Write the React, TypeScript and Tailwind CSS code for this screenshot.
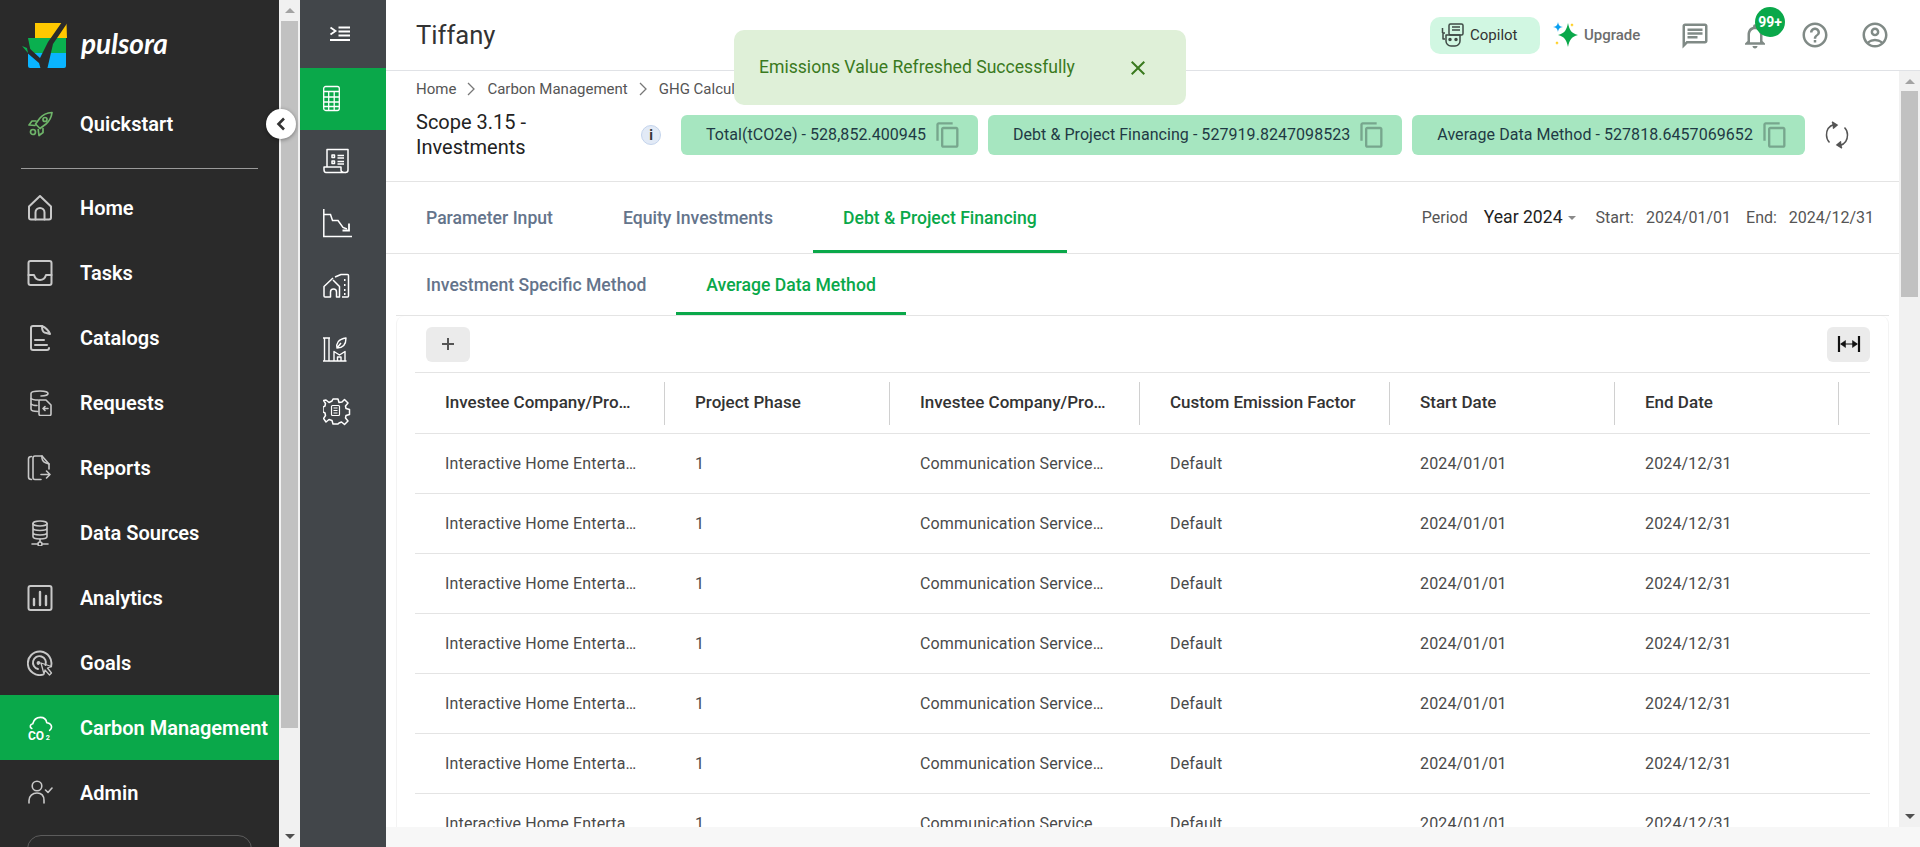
import React from "react";
import { MdOutlineChat, MdNotificationsNone, MdHelpOutline, MdOutlineAccountCircle, MdOutlineContentCopy, MdClose } from "react-icons/md";

const s = { fill: "none", stroke: "currentColor", strokeWidth: 2, strokeLinecap: "round" as const, strokeLinejoin: "round" as const };

const SideIcons: Record<string, React.ReactNode> = {
  rocket: (
    <svg width="26" height="26" viewBox="0 0 26 26" {...s} strokeWidth={1.7} className="text-[#6fb56a]">
      <path d="M25 1.500c-5 .4-9 2-12 5.500l-4.500 6 4.500 4.500 6-4.500c3.500-3 5.500-7 6-11.500Z" />
      <path d="M9 10H5l-3 4 6 .5M16 17.500V21.500l-4 3-.8-6" />
      <circle cx="18" cy="8.500" r="2" />
      <circle cx="6" cy="21" r="2.500" />
    </svg>
  ),
  home: (
    <svg width="26" height="26" viewBox="0 0 26 26" {...s}>
      <path d="M2 11.500 13 1l11 10.500V22.500a2 2 0 0 1-2 2H4a2 2 0 0 1-2-2Z" />
      <path d="M8.500 24.500V17.500a4.500 4.500 0 0 1 9 0v7" />
    </svg>
  ),
  tasks: (
    <svg width="26" height="26" viewBox="0 0 26 26" {...s}>
      <rect x="1.500" y="1" width="23" height="24" rx="2" />
      <path d="M1.500 15H7c1 3.500 3 5 6 5s5-1.500 6-5h5.500" />
    </svg>
  ),
  catalogs: (
    <svg width="26" height="26" viewBox="0 0 26 26" {...s}>
      <path d="M15 1H6a2 2 0 0 0-2 2v20a2 2 0 0 0 2 2h14a2 2 0 0 0 2-2" />
      <path d="M15 1c0 3.500 1 6 2.500 6.500L23 9c-1.500-3.500-4.500-6.500-8-8Z" />
      <path d="M8 15h9M8 20h12" />
    </svg>
  ),
  requests: (
    <svg width="26" height="26" viewBox="0 0 26 26" {...s} strokeWidth={1.6}>
      <path d="M14 6c4 0 7-1.200 7-2.500S18 1 13 1 4 2 4 3.500V19c0 1.500 3 2.500 7 2.500" />
      <path d="M4 8.500c1 1 4 1.500 7 1.500M4 14c1 1 4 1.500 6 1.500" />
      <path d="M12 10h7l5 5v9a1.500 1.500 0 0 1-1.500 1.500h-9A1.500 1.500 0 0 1 12 24Z" />
      <path d="M21 18.500h-5m2-2-2 2 2 2" />
    </svg>
  ),
  reports: (
    <svg width="26" height="26" viewBox="0 0 26 26" {...s} strokeWidth={1.6}>
      <path d="M4.500 1.500c-2 0-3 1-3 2.500v18c0 1.500 1 2.500 3 2.500" />
      <path d="M22 14V9l-7-8H8a2 2 0 0 0-2 2v19.500A2 2 0 0 0 8 24.500h6" />
      <path d="M15 1c-.5 3 1 6 3 6.500L22 9" />
      <path d="M14 19.500h9m-3.500-3.500 3.500 3.500-3.500 3.500" />
    </svg>
  ),
  data: (
    <svg width="26" height="26" viewBox="0 0 26 26" {...s} strokeWidth={1.6}>
      <ellipse cx="13" cy="3.500" rx="7" ry="2.500" />
      <path d="M6 3.500v13c0 1.400 3 2.500 7 2.500s7-1.100 7-2.500v-13M6 8c0 1.400 3 2.500 7 2.500s7-1.100 7-2.500M6 12.500c0 1.400 3 2.500 7 2.500s7-1.100 7-2.500" />
      <path d="M13 19v2.500M5 24h5.500M15.500 24H21" />
      <circle cx="13" cy="24" r="2" />
    </svg>
  ),
  analytics: (
    <svg width="26" height="26" viewBox="0 0 26 26" {...s}>
      <rect x="1.500" y="1" width="23" height="24" rx="2" />
      <path d="M7 14v6M13 7v13M19 11v9" strokeWidth={2.400} />
    </svg>
  ),
  goals: (
    <svg width="26" height="26" viewBox="0 0 26 26" {...s} strokeWidth={1.9}>
      <path d="M24 16.500A11.800 11.800 0 1 0 16 24.600" />
      <path d="M18.500 15A6.500 6.500 0 1 0 11 19" />
      <path d="M12.500 13a1 1 0 1 0-1 1" />
      <path d="M14 13l10.500 3.500-4 1.500 4 5-2 2-4.500-5-1 4Z" strokeWidth={1.300} />
    </svg>
  ),
  co2: (
    <svg width="27" height="27" viewBox="0 0 27 27" className="text-white">
      <path d="M5 13.500c-2.500-1-2-4.500 1-5 1-4 3.500-6.500 8-6.500 4 0 6 2.500 6.500 5.500 3.500.5 5 2.500 5 4.500 0 1.500-.6 2.600-2 3.500" {...s} strokeWidth={1.700} />
      <text x="1" y="25" fontFamily="Roboto" fontWeight="700" fontSize="12.500" fill="currentColor">CO</text>
      <text x="19.500" y="25" fontFamily="Roboto" fontWeight="700" fontSize="7.500" fill="currentColor">2</text>
    </svg>
  ),
  admin: (
    <svg width="26" height="26" viewBox="0 0 26 26" {...s} strokeWidth={1.600}>
      <circle cx="10" cy="6" r="4.800" />
      <path d="M2 23v-2.500C2 16 5.500 13 10 13s7 3 7 7.500V23" />
      <path d="m18.500 10 2.500 2.500 4-4.500" />
    </svg>
  ),
};

const RailIcons: Record<string, React.ReactNode> = {
  menu: (
    <svg width="30" height="30" viewBox="0 0 30 30" fill="none" stroke="white" strokeWidth="1.800">
      <path d="m7.500 8.500 5 3.500-5 3.500" />
      <path d="M15.500 8.500H27M15.500 12.500H27M15.500 16.500H27M7 21H27" />
    </svg>
  ),
  calc: (
    <svg width="30" height="30" viewBox="0 0 30 30" fill="none" stroke="white" strokeWidth="1.300">
      <rect x="0.700" y="2.500" width="15.600" height="24" rx="2" />
      <path d="M0.700 7.500h15.600M0.700 13h15.600M0.700 18h15.600M0.700 22.500h15.600M5.700 7.500v19M11.200 7.500v19" />
    </svg>
  ),
  doc: (
    <svg width="30" height="30" viewBox="0 0 30 30" fill="none" stroke="white" strokeWidth="1.500" strokeLinejoin="round">
      <path d="M4 21V3.500h21V24c0 1.500-1 2.500-2.500 2.500" />
      <path d="M1 23.500V21h17v3c0 1.500 1.800 2.500 4.500 2.500H3c-1.300 0-2-1.500-2-3Z" />
      <path d="M9 9h2.500v2.500H9zM9 15h2.500v2.500H9zM14.500 9.500H21M14.500 12H21M14.500 15.500H21M14.500 18H21" />
    </svg>
  ),
  chart: (
    <svg width="30" height="30" viewBox="0 0 30 30" fill="none" stroke="white" strokeWidth="1.500">
      <path d="M0.800 1V28.500H29" />
      <path d="M1 6.500h6.500l2 6h5.500l5 7 4 1.500" />
      <path d="M26 15.500v7h-6.500" strokeWidth="1.800" />
    </svg>
  ),
  building: (
    <svg width="30" height="30" viewBox="0 0 30 30" fill="none" stroke="white" strokeWidth="1.500" strokeLinejoin="round">
      <path d="M10 7 1 15.500V25a1 1 0 0 0 1 1h5.500v-5a3 3 0 0 1 6 0v5h3V15.500L10 9" />
      <path d="M12 6 18 3.500h6.500a1 1 0 0 1 1 1V25a1 1 0 0 1-1 1H19" />
      <path d="M21 9h1.500M21 14h1.500M21 19h1.500M21 23h1.500" strokeWidth="2" />
    </svg>
  ),
  factory: (
    <svg width="30" height="30" viewBox="0 0 30 30" fill="none" stroke="white" strokeWidth="1.400" strokeLinejoin="round">
      <path d="M0 4h7M0 27h23.500M1.500 4v23M6 4v23M11 27V17.500l5.500 3.500 5.500-3.500V27" />
      <path d="M14.500 27v-4h3.500v4" />
      <path d="M14 14c-1-4 1-9 9-10 0 6-3 10-9 10Zm0 0 4-5" />
    </svg>
  ),
  gear: (
    <svg width="30" height="30" viewBox="0 0 30 30" fill="none" stroke="white" strokeWidth="1.500" strokeLinejoin="round">
      <path d="M10 2h5l1 3.500 3-.5 2.500-2.500 3.500 3.500-2.500 3 .5 2.500 3.500 1v5l-3.500 1-.5 2.500 2.500 3-3.500 3.500-3-2.500-2.500 1L15 27h-5l-1-3.500-3-1-3 2.500L.5 21.500l2-3-.5-2.500-2-1v-5l2-1 .5-2.500-2-3L3 3l3 2.500 3-1.500Z" />
      <rect x="8.500" y="8.500" width="8" height="10" rx="1" strokeWidth="1.200" />
      <path d="M10.500 11h4M10.500 13.500h4M10.500 16h4" strokeWidth="1.200" />
    </svg>
  ),
};

const navItems: [string, string][] = [
  ["home", "Home"],
  ["tasks", "Tasks"],
  ["catalogs", "Catalogs"],
  ["requests", "Requests"],
  ["reports", "Reports"],
  ["data", "Data Sources"],
  ["analytics", "Analytics"],
  ["goals", "Goals"],
  ["co2", "Carbon Management"],
  ["admin", "Admin"],
];

function NavRow({ icon, label, active }: { icon: string; label: string; active?: boolean }) {
  return (
    <div className={`flex h-[65px] shrink-0 items-center pl-[27px] ${active ? "bg-[#0aa84a] text-white" : "text-[#c8c8c8]"}`}>
      <span className="flex h-[26px] w-[26px] shrink-0">{SideIcons[icon]}</span>
      <span className="ml-[27px] whitespace-nowrap text-[20px] font-semibold leading-none text-white">{label}</span>
    </div>
  );
}

function Logo() {
  return (
    <svg width="48" height="48" viewBox="0 0 48 48" className="shrink-0">
      <path d="M14 1h31.500L46 16H14Z" fill="#ffc800" />
      <path d="M7 16h38v15H10Z" fill="#0ab04f" />
      <path d="M7 31h38v13a2 2 0 0 1-2 2H9a2 2 0 0 1-2-2Z" fill="#0ab4ff" />
      <path d="M0 22l7 3 12 11 8-16L41 0h6L32 22l-6 26H20l-2-7L4 29Z" fill="#2a2a2a" />
      <path d="M1 24l5 2 1 5Z" fill="#0ab04f" />
    </svg>
  );
}

function Scrollbar({ thumbTop, thumbHeight }: { thumbTop: string; thumbHeight: string }) {
  return (
    <div className="relative flex w-[21px] shrink-0 flex-col items-center justify-between bg-[#f1f1f1] py-[8px]">
      <span className="h-0 w-0 border-x-[5px] border-b-[5px] border-x-transparent border-b-[#a3a3a3]" />
      <span className={`absolute left-[2px] w-[17px] bg-[#c1c1c1] ${thumbTop} ${thumbHeight}`} />
      <span className="h-0 w-0 border-x-[5px] border-t-[5px] border-x-transparent border-t-[#505050]" />
    </div>
  );
}

function Pill({ text }: { text: string }) {
  return (
    <div className="flex h-[40px] items-center gap-[8px] rounded-[6px] bg-[#a6e6c0] pl-[25px] pr-[16px] text-[16px] tracking-[0.05px] text-[#1f3a44]">
      <span className="whitespace-nowrap">{text}</span>
      <MdOutlineContentCopy className="text-[#77a68d]" size={28} />
    </div>
  );
}

const cols = ["w-[250px]", "w-[225px]", "w-[250px]", "w-[250px]", "w-[225px]", "w-[224px]"];
const headPad = ["pr-[33px]", "pr-[10px]", "pr-[33px]", "pr-[10px]", "pr-[10px]", "pr-[10px]"];
const cellPad = ["pr-[26px]", "pr-[10px]", "pr-[36px]", "pr-[10px]", "pr-[10px]", "pr-[10px]"];
const heads = ["Investee Company/Project Name", "Project Phase", "Investee Company/Project Sector", "Custom Emission Factor", "Start Date", "End Date"];
const cells = ["Interactive Home Entertainment", "1", "Communication Services Sector", "Default", "2024/01/01", "2024/12/31"];

function Table() {
  return (
    <div className="border-t border-[#e4e4e4]">
      <div className="flex h-[61px] items-center border-b border-[#e4e4e4]">
        {heads.map((h, i) => (
          <div key={h} className={`${cols[i]} ${headPad[i]} flex h-[43px] shrink-0 items-center border-r border-[#d0d0d0] pl-[30px] text-[17px] font-medium text-[#333333]`}>
            <span className="truncate">{h}</span>
          </div>
        ))}
      </div>
      {Array.from({ length: 7 }).map((_, r) => (
        <div key={r} className="flex h-[60px] shrink-0 items-center border-b border-[#e4e4e4]">
          {cells.map((c, i) => (
            <div key={i} className={`${cols[i]} ${cellPad[i]} shrink-0 pl-[30px] text-[16px] tracking-[0.16px] text-[#4a4a4a]`}>
              <div className="truncate">{c}</div>
            </div>
          ))}
        </div>
      ))}
    </div>
  );
}

export default function App() {
  return (
    <div className="flex h-[847px] w-[1920px] overflow-hidden bg-white font-['Roboto',sans-serif]">
      <aside className="flex h-full w-[279px] shrink-0 flex-col overflow-hidden bg-[#2a2a2a]">
        <div className="flex h-[91px] shrink-0 items-center pl-[21px]">
          <Logo />
          <span className="mb-[6px] ml-[12px] font-['Lato',sans-serif] text-[28px] font-bold italic leading-none text-white">pulsora</span>
        </div>
        <NavRow icon="rocket" label="Quickstart" />
        <div className="mx-[21px] mb-[6px] mt-[12px] h-px shrink-0 bg-[#9a9a9a]" />
        {navItems.map(([i, l]) => (
          <NavRow key={l} icon={i} label={l} active={l === "Carbon Management"} />
        ))}
        <div className="mx-[27px] mt-[10px] h-[40px] shrink-0 rounded-[14px] border border-[#5c5c5c]" />
      </aside>

      <Scrollbar thumbTop="top-[21px]" thumbHeight="h-[707px]" />

      <nav className="flex h-full w-[86px] shrink-0 flex-col bg-[#42464a]">
        {["menu", "calc", "doc", "chart", "building", "factory", "gear"].map((k, i) => (
          <div key={k} className={`flex shrink-0 items-center pl-[23px] ${i === 0 ? "h-[68px]" : i < 4 ? "h-[62px]" : "h-[63px]"} ${k === "calc" ? "bg-[#0aa84a]" : ""}`}>
            {RailIcons[k]}
          </div>
        ))}
      </nav>

      <main className="relative flex h-full min-w-0 flex-1 flex-col">
        <header className="flex h-[71px] shrink-0 items-center border-b border-[#e0e2e6] pl-[30px]">
          <span className="text-[25.6px] text-[#333333]">Tiffany</span>
          <div className="ml-auto flex items-center">
            <div className="flex h-[37px] w-[110px] items-center rounded-[10px] bg-[#d1f7e2] pl-[10px]">
              <svg width="24" height="24" viewBox="0 0 24 24" fill="none" stroke="#3f4a45" strokeWidth="1.500" strokeLinejoin="round">
                <rect x="9" y="1" width="14" height="11" rx="1.500" />
                <path d="M12 4h8M12 7h8" />
                <path d="M5 10H3v6h2M2.500 10V5" />
                <path d="M6 12h14v6a5 5 0 0 1-5 5h-4a5 5 0 0 1-5-5Z" />
                <circle cx="10" cy="16.500" r="1" fill="#3f4a45" />
                <circle cx="16" cy="16.500" r="1" fill="#3f4a45" />
              </svg>
              <span className="ml-[6px] text-[15px] text-[#333333]">Copilot</span>
            </div>
            <div className="ml-[13px] flex w-[90px] items-center">
              <svg width="26" height="34" viewBox="0 0 26 34">
                <path d="M15 5c1.500 7 3 10 10 12-7 2-8.500 5-10 12-1.500-7-3-10-10-12 7-2 8.500-5 10-12Z" fill="#0aa84a" />
                <path d="M5 4c.5 3 1.500 4.500 5 5-3.500.5-4.500 2-5 5-.5-3-1.500-4.500-5-5 3.500-.5 4.500-2 5-5Z" fill="#0aa0f0" />
                <path d="M19 5c.3 1.300.7 1.700 2 2-1.300.3-1.700.7-2 2-.3-1.300-.7-1.700-2-2 1.300-.3 1.700-.7 2-2Z" fill="#ffc800" />
                <path d="M4 23c.3 1.300.7 1.700 2 2-1.300.3-1.700.7-2 2-.3-1.300-.7-1.700-2-2 1.300-.3 1.700-.7 2-2Z" fill="#ffc800" />
              </svg>
              <span className="ml-[5px] text-[15px] font-medium text-[#6d6d6d]">Upgrade</span>
            </div>
            <div className="ml-[37px] flex items-center gap-[30px] pr-[30px] text-[#808a86]">
              <MdOutlineChat size={30} className="mt-[2px]" />
              <div className="relative">
                <MdNotificationsNone size={30} className="mt-[2px]" />
                <span className="absolute left-[15px] top-[-12px] flex h-[30px] w-[30px] items-center justify-center rounded-full bg-[#0aa84a] text-[14px] font-bold text-white">99+</span>
              </div>
              <MdHelpOutline size={30} />
              <MdOutlineAccountCircle size={30} />
            </div>
          </div>
        </header>

        <div className="flex min-h-0 flex-1">
          <div className="min-w-0 flex-1 overflow-hidden">
            <div className="flex h-[36px] items-center pl-[30px] text-[15px] text-[#555555]">
              <span>Home</span>
              <svg width="31" height="16" viewBox="0 0 31 16" fill="none" stroke="#777777" strokeWidth="1.300"><path d="m12 2 6 6-6 6" /></svg>
              <span>Carbon Management</span>
              <svg width="31" height="16" viewBox="0 0 31 16" fill="none" stroke="#777777" strokeWidth="1.300"><path d="m12 2 6 6-6 6" /></svg>
              <span>GHG Calculator</span>
            </div>
            <div className="flex h-[75px] items-start border-b border-[#e4e4e4] pl-[30px]">
              <div className="w-[225px] pt-[3px] text-[20px] leading-[25px] text-[#222222]">Scope 3.15 -<br />Investments</div>
              <span className="mt-[18px] flex h-[20px] w-[20px] items-center justify-center rounded-full border border-[#c4d4ec] bg-[#e2eaf6] text-[14px] font-bold text-[#333333]">i</span>
              <div className="ml-[20px] mt-[8px] flex gap-[10px]">
                <Pill text="Total(tCO2e) - 528,852.400945" />
                <Pill text="Debt & Project Financing - 527919.8247098523" />
                <Pill text="Average Data Method - 527818.6457069652" />
              </div>
              <svg className="ml-[18px] mt-[14px]" width="28" height="28" viewBox="0 0 28 28" fill="none" stroke="#555555" strokeWidth="1.500">
                <path d="M11 3.500C6 5 3.500 9 3.500 14c0 3 1 5.500 3 7.500" />
                <path d="M17 24.500c5-1.500 7.500-5.500 7.500-10.500 0-3-1-5.500-3-7.500" />
                <path d="m9 1 5 3-4 3.500" fill="#555555" />
                <path d="m19 27-5-3 4-3.500" fill="#555555" />
              </svg>
            </div>
            <div className="flex h-[72px] items-stretch border-b border-[#e4e4e4] pl-[10px]">
              <div className="mr-[10px] flex items-center px-[30px] pt-[1px] text-[17.6px] font-medium text-[#64748b]">Parameter Input</div>
              <div className="mr-[10px] flex items-center px-[30px] pt-[1px] text-[17.6px] font-medium text-[#64748b]">Equity Investments</div>
              <div className="flex items-center border-b-[3px] border-[#0aa84a] px-[30px] pt-[4px] text-[17.6px] font-medium text-[#0aa84a]">Debt &amp; Project Financing</div>
              <div className="ml-auto flex items-center pr-[25px] text-[16px] text-[#555555]">
                <span>Period</span>
                <span className="ml-[16px] text-[17.6px] text-[#222222]">Year 2024</span>
                <span className="ml-[5px] h-0 w-0 border-x-[4px] border-t-[4px] border-x-transparent border-t-[#8a8a8a]" />
                <span className="ml-[20px]">Start:</span>
                <span className="ml-[12px]">2024/01/01</span>
                <span className="ml-[15px]">End:</span>
                <span className="ml-[12px]">2024/12/31</span>
              </div>
            </div>
            <div className="mx-[10px] flex h-[62px] items-stretch border-b border-[#e4e4e4]">
              <div className="flex items-center px-[30px] pt-[2px] text-[17.6px] font-medium text-[#64748b]">Investment Specific Method</div>
              <div className="flex items-center border-b-[3px] border-[#0aa84a] px-[30px] pt-[5px] text-[17.6px] font-medium text-[#0aa84a]">Average Data Method</div>
            </div>
            <div className="mx-[10px] rounded-t-[8px] border-x border-[#f3f3f3] pl-[18px] pr-[18px]">
              <div className="flex h-[56px] items-center justify-between pl-[11px]">
                <button className="flex h-[35px] w-[44px] items-center justify-center rounded-[6px] bg-[#ebebeb] text-[#555555]">
                  <svg width="14" height="14" viewBox="0 0 14 14" stroke="#555555" strokeWidth="2"><path d="M7 1v12M1 7h12" /></svg>
                </button>
                <button className="flex h-[35px] w-[43px] items-center justify-center rounded-[6px] bg-[#ebebeb]">
                  <svg width="24" height="18" viewBox="0 0 24 18" fill="#111111" stroke="#111111" strokeWidth="2.200">
                    <path d="M2 1v16M22 1v16" />
                    <path d="M4 9h16" strokeWidth="1" />
                    <path d="m3.500 9 5-3.500v7ZM20.500 9l-5-3.500v7Z" strokeWidth="0.500" />
                  </svg>
                </button>
              </div>
              <Table />
            </div>
          </div>
          <Scrollbar thumbTop="top-[20px]" thumbHeight="h-[206px]" />
        </div>
        <div className="h-[20px] shrink-0 bg-[#f7f7f7]" />

        <div className="absolute left-[348px] top-[30px] z-10 flex h-[75px] w-[452px] items-center justify-between rounded-[10px] bg-[#dff0d8] pl-[25px] pr-[36px] text-[17.6px] text-[#3a7a1e]">
          <span>Emissions Value Refreshed Successfully</span>
          <MdClose size={24} />
        </div>
      </main>

      <button className="absolute left-[266px] top-[109px] z-20 flex h-[30px] w-[30px] items-center justify-center rounded-full bg-white shadow-[0_1px_4px_rgba(0,0,0,0.4)]">
        <svg width="12" height="14" viewBox="0 0 12 14" fill="none" stroke="#333333" strokeWidth="2.600"><path d="M9 1.500 3.500 7 9 12.500" /></svg>
      </button>
    </div>
  );
}
